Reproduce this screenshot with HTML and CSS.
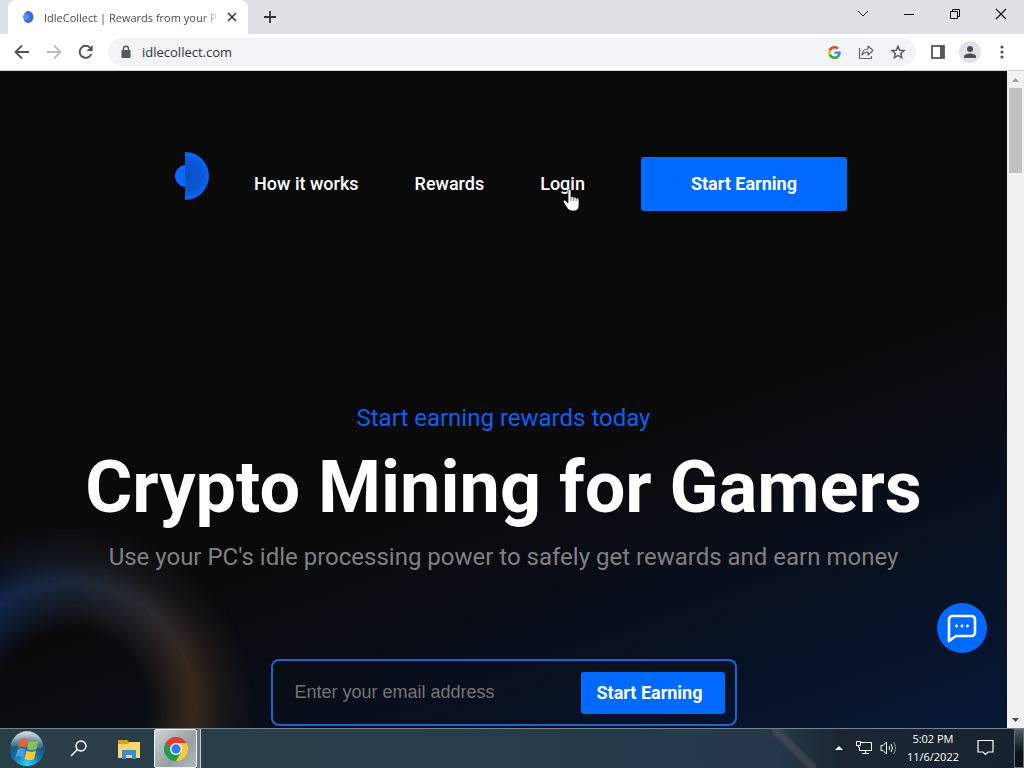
FILE: index.html
```html
<!DOCTYPE html>
<html lang="en">

<head>
    <meta charset="UTF-8">
    <meta name="viewport" content="width=device-width, initial-scale=1.0">
    <title>IdleCollect | Rewards from your PC</title>
    <link rel="stylesheet" href="styles.css">
</head>

<body>

    <!-- Tab strip -->
    <div class="tabStrip">
        <div class="tab">
            <svg class="favicon" width="16" height="16" viewBox="0 0 16 16">
                <path d="M7 2a6 6 0 0 1 0 12z" fill="#2a5fd0" />
                <path d="M9 2.300a4.500 5.700 0 0 1 0 11.400L7 14 4 11.500V5L7 2z" fill="#3d6fd6" />
                <circle cx="6" cy="8" r="3" fill="#5a8ff0" />
            </svg>
            <span class="tabTitle">IdleCollect | Rewards from your P</span>
            <button class="iconButton tabClose" aria-label="Close tab">
                <svg width="10" height="10" viewBox="0 0 10 10"><path d="M1 1l8 8M9 1L1 9" stroke="#303338" stroke-width="1.600" /></svg>
            </button>
        </div>
        <button class="iconButton newTab" aria-label="New tab">
            <svg width="14" height="14" viewBox="0 0 14 14"><path d="M7 1v12M1 7h12" stroke="#303338" stroke-width="1.800" /></svg>
        </button>
        <div class="windowButtons">
            <button class="iconButton" aria-label="Search tabs">
                <svg width="12" height="12" viewBox="0 0 12 12" fill="none" stroke="#222"><path d="M1 3l5 5 5-5" /></svg>
            </button>
            <button class="iconButton" aria-label="Minimize">
                <svg width="12" height="12" viewBox="0 0 12 12"><path d="M1 6.500h10" stroke="#111" /></svg>
            </button>
            <button class="iconButton" aria-label="Restore">
                <svg width="12" height="12" viewBox="0 0 12 12" fill="none" stroke="#111"><path d="M1.500 3.500h7v7h-7zM3.500 3.500v-2h7v7h-2" /></svg>
            </button>
            <button class="iconButton" aria-label="Close">
                <svg width="12" height="12" viewBox="0 0 12 12"><path d="M1 1l10 10M11 1L1 11" stroke="#111" stroke-width="1.100" /></svg>
            </button>
        </div>
    </div>

    <!-- Toolbar -->
    <div class="toolbar">
        <button class="iconButton" aria-label="Back">
            <svg width="16" height="16" viewBox="0 0 16 16" fill="none" stroke="#505357" stroke-width="1.800"><path d="M15 8H2M8 1.500L1.500 8 8 14.500" /></svg>
        </button>
        <button class="iconButton" aria-label="Forward">
            <svg width="16" height="16" viewBox="0 0 16 16" fill="none" stroke="#babcbe" stroke-width="1.800"><path d="M1 8h13M8 1.500L14.500 8 8 14.500" /></svg>
        </button>
        <button class="iconButton" aria-label="Reload">
            <svg width="16" height="16" viewBox="0 0 16 16"><path d="M13.300 10A6 6 0 1 1 12.500 4.200" fill="none" stroke="#505357" stroke-width="1.900" /><path d="M14.700 1v6H8.700z" fill="#505357" /></svg>
        </button>
        <div class="addressBar">
            <svg class="lock" width="12" height="14" viewBox="0 0 12 14"><rect x="1.500" y="5" width="9" height="8" rx="1" fill="#55585c" /><path d="M3.500 5.500V3.700a2.500 2.500 0 0 1 5 0v1.800" fill="none" stroke="#55585c" stroke-width="1.400" /></svg>
            <input class="address" type="text" value="idlecollect.com" aria-label="Address">
            <button class="iconButton" aria-label="Search with Google">
                <svg width="13" height="13" viewBox="0 0 48 48">
                    <path fill="#EA4335" d="M24 9.500c3.500 0 6.700 1.200 9.200 3.600l6.900-6.900C35.900 2.400 30.500 0 24 0 14.600 0 6.500 5.400 2.600 13.200l8 6.200C12.400 13.700 17.700 9.500 24 9.500z" />
                    <path fill="#4285F4" d="M47 24.600c0-1.600-.2-3.100-.4-4.600H24v9h12.900c-.6 3-2.300 5.500-4.800 7.200l7.700 6C44.400 38 47 32.100 47 24.600z" />
                    <path fill="#FBBC05" d="M10.500 28.600a14.500 14.500 0 0 1 0-9.200l-8-6.200a24 24 0 0 0 0 21.600z" />
                    <path fill="#34A853" d="M24 48c6.500 0 11.900-2.100 15.900-5.800l-7.700-6c-2.200 1.500-4.900 2.300-8.200 2.300-6.300 0-11.600-4.200-13.500-9.900l-8 6.200C6.500 42.600 14.600 48 24 48z" />
                </svg>
            </button>
            <button class="iconButton" aria-label="Share">
                <svg width="16" height="16" viewBox="0 0 16 16" fill="none" stroke="#64676b" stroke-width="1.200"><path d="M1.500 4v10.500h12V12" /><path d="M4 11c.3-4 2.500-6 6-6V2l5 4.500-5 4.500V8C7.500 8 5.500 9 4 11z" stroke-linejoin="round" /></svg>
            </button>
            <button class="iconButton" aria-label="Bookmark">
                <svg width="16" height="16" viewBox="0 0 16 16"><path d="M8 2.300l1.700 4 4.300.3-3.300 2.900 1.100 4.300L8 11.500l-3.800 2.300 1.100-4.300L2 6.600l4.300-.3z" fill="none" stroke="#55585c" stroke-width="1.400" /></svg>
            </button>
        </div>
        <button class="iconButton" aria-label="Side panel">
            <svg width="14" height="14" viewBox="0 0 14 14"><rect x="1" y="1" width="12" height="12" fill="none" stroke="#55575d" stroke-width="1.800" /><path d="M9 1h4v12H9z" fill="#55575d" /></svg>
        </button>
        <button class="iconButton" aria-label="Profile">
            <svg width="22" height="22" viewBox="0 0 22 22"><circle cx="11" cy="11" r="11" fill="#dfe2e7" /><circle cx="11" cy="8" r="3" fill="#4c5057" /><path d="M5 17v-1.500c0-2 3.500-3 6-3s6 1 6 3V17z" fill="#4c5057" /></svg>
        </button>
        <button class="iconButton" aria-label="Menu">
            <svg width="4" height="14" viewBox="0 0 4 14" fill="#505357"><circle cx="2" cy="2" r="1.600" /><circle cx="2" cy="7" r="1.600" /><circle cx="2" cy="12" r="1.600" /></svg>
        </button>
    </div>

    <!-- Web page -->
    <div class="viewport">
        <main class="page">
            <nav class="nav">
                <a href="#" aria-label="IdleCollect">
                    <svg class="logo" width="66" height="66" viewBox="0 0 66 66">
                        <defs>
                            <radialGradient id="half" gradientUnits="userSpaceOnUse" cx="26" cy="25" r="24">
                                <stop offset="0" stop-color="#0a4fc0" />
                                <stop offset=".65" stop-color="#0a58d4" />
                                <stop offset="1" stop-color="#0868f8" />
                            </radialGradient>
                        </defs>
                        <circle cx="26" cy="25" r="11" fill="#056aff" />
                        <path d="M25 1a24 24 0 0 1 0 48z" fill="url(#half)" />
                    </svg>
                </a>
                <a class="navLink" href="#">How it works</a>
                <a class="navLink" href="#">Rewards</a>
                <a class="navLink" href="#">Login
                    <svg class="cursor" width="18" height="24" viewBox="0 0 18 24"><path d="M5 2c0-2 3-2 3 0v6c1-1 2.500-.5 2.700.5 1-.7 2.200-.2 2.500.8 1.200-.6 2.800 0 2.800 1.700v5c0 4-2 6-6 6-3.500 0-5-1.500-6.500-4L.6 13.500c-1-1.500.8-3 2.200-1.700L5 14z" fill="#fff" stroke="#111" stroke-width=".8" /><path d="M8 8v4M10.700 8.500V12M13.200 9.500V12" stroke="#111" stroke-width=".6" /></svg>
                </a>
                <button class="button navButton">Start Earning</button>
            </nav>

            <section class="hero">
                <p class="kicker">Start earning rewards today</p>
                <h1>Crypto Mining for Gamers</h1>
                <p class="lead">Use your PC's idle processing power to safely get rewards and earn money</p>
                <form class="signup">
                    <input class="email" type="email" placeholder="Enter your email address" aria-label="Email address">
                    <button class="button" type="button">Start Earning</button>
                </form>
            </section>

            <button class="chat" aria-label="Open chat">
                <svg width="30" height="30" viewBox="0 0 30 30"><path d="M2 28V6.500A3.500 3.500 0 0 1 5.500 3h19A3.500 3.500 0 0 1 28 6.500v13a3.500 3.500 0 0 1-3.500 3.500H9z" fill="none" stroke="#fff" stroke-width="2.600" stroke-linejoin="round" /><g fill="#fff"><circle cx="9.500" cy="13" r="1.400" /><circle cx="15" cy="13" r="1.400" /><circle cx="20.500" cy="13" r="1.400" /></g></svg>
            </button>
        </main>
        <div class="scrollbar">
            <svg width="17" height="17" viewBox="0 0 17 17"><path d="M5 11l3.500-4 3.500 4z" fill="#a0a0a0" /></svg>
            <div class="thumb"></div>
            <svg width="17" height="17" viewBox="0 0 17 17"><path d="M5 7l3.500 4L12 7z" fill="#4c4c4c" /></svg>
        </div>
    </div>

    <!-- Taskbar -->
    <div class="taskbar">
        <button class="taskButton start" aria-label="Start">
            <svg width="36" height="36" viewBox="0 0 36 36">
                <defs>
                    <radialGradient id="orb" cx=".5" cy=".95" r=".95">
                        <stop offset="0" stop-color="#35d4f5" />
                        <stop offset=".4" stop-color="#1577ad" />
                        <stop offset=".75" stop-color="#1d4a72" />
                        <stop offset="1" stop-color="#8ba3b4" />
                    </radialGradient>
                    <linearGradient id="gloss" x2="0" y2="1">
                        <stop offset="0" stop-color="#fff" stop-opacity=".65" />
                        <stop offset="1" stop-color="#fff" stop-opacity=".15" />
                    </linearGradient>
                </defs>
                <circle cx="18" cy="18" r="17.500" fill="url(#orb)" stroke="#274b62" />
                <path d="M2 16a16 16 0 0 1 32 0c-9 4-22-4-32 0z" fill="url(#gloss)" />
                <path d="M11.500 8.500c2.500-1.500 5-1.500 7.500 0l-2 8.500c-2.500-1.700-5-1.700-8 0z" fill="#e8602c" />
                <path d="M20 9.500c3 1.700 6 1.700 9.500 0L27.500 18c-3 1.700-6 1.700-9.500 0z" fill="#8cc04b" />
                <path d="M8.500 18.500c3-1.700 5.500-1.700 8 0l-2 8c-2.500-1.700-5-1.700-8 0z" fill="#4a9edb" />
                <path d="M17.500 19.500c3.500 1.700 6.500 1.700 9.500 0l-2 8.500c-3 1.700-6 1.700-9.500 0z" fill="#fbc938" />
            </svg>
        </button>
        <button class="taskButton" aria-label="Search">
            <svg width="18" height="18" viewBox="0 0 18 18" fill="none" stroke="#fff" stroke-width="1.400"><circle cx="11" cy="6" r="5" /><path d="M7.400 9.600L1 16" /></svg>
        </button>
        <button class="taskButton" aria-label="File Explorer">
            <svg width="22" height="20" viewBox="0 0 22 20"><path d="M0 1h9l2 2h11v5H0z" fill="#d9a21b" /><path d="M0 5h10l2-2h10v16H0z" fill="#fbd768" /><path d="M4 20v-9h14v9h-4v-4H8v4z" fill="#3b8fc9" /></svg>
        </button>
        <button class="taskButton active" aria-label="Google Chrome">
            <svg width="24" height="24" viewBox="0 0 24 24">
                <path d="M12 12L1.600 6A12 12 0 0 1 22.400 6z" fill="#e33b2e" />
                <path d="M12 12L22.400 6A12 12 0 0 1 12 24z" fill="#fcc934" />
                <path d="M12 12v12A12 12 0 0 1 1.600 6z" fill="#1e9e4a" />
                <path d="M12 6h10.400l-5.200 9z" fill="#fcc934" />
                <path d="M6.800 15L1.600 6 12 6z" fill="#e33b2e" />
                <path d="M1.600 6l5.200 9L12 18z" fill="#1e9e4a" />
                <path d="M6.800 15L12 24l5.200-9z" fill="#1e9e4a" />
                <circle cx="12" cy="12" r="6" fill="#fff" />
                <circle cx="12" cy="12" r="4.700" fill="#2f7bf0" />
            </svg>
        </button>
        <div class="stack"></div>
        <div class="tray">
            <svg width="8" height="4" viewBox="0 0 8 4"><path d="M0 4l4-4 4 4z" fill="#fff" /></svg>
            <svg class="network" width="16" height="14" viewBox="0 0 16 14" fill="none" stroke="#fff"><path d="M5 1.500h10.500v8H3.500V6M9.500 9.500v3M6 12.500h7M.5.500h4v4h-4zM2.500 4.500v2" /></svg>
            <svg width="18" height="14" viewBox="0 0 18 14" fill="none" stroke="#fff"><path d="M1 4.500h2L6.500 1v12L3 9.500H1z" /><path d="M9 5q1.500 2 0 4M11 3q3 4 0 8" /><path d="M13.500 1q4 6 0 12" stroke="#8c969e" /></svg>
            <div class="clock">
                <span>5:02 PM</span>
                <span>11/6/2022</span>
            </div>
            <svg width="17" height="17" viewBox="0 0 17 17" fill="none" stroke="#fff" stroke-width="1.200"><path d="M1 1.500h15v11.500h-5L8.500 15.500 6 13H1z" /></svg>
        </div>
        <button class="showDesktop" aria-label="Show desktop"></button>
    </div>

</body>

</html>
```
FILE: styles.css
```css
* {
    box-sizing: border-box;
}

body {
    margin: 0;
    height: 100vh;
    display: flex;
    flex-direction: column;
    overflow: hidden;
    background-color: #0a0a0a;
    font-family: "Open Sans", "Noto Sans", sans-serif;
    font-size: 11px;
}

h1,
p {
    margin: 0;
}

button,
input {
    border: 0;
    padding: 0;
    margin: 0;
    background: none;
    font-family: inherit;
}

svg {
    display: block;
    flex-shrink: 0;
}

.iconButton {
    width: 32px;
    height: 28px;
    display: flex;
    align-items: center;
    justify-content: center;
    flex-shrink: 0;
}

/* tab strip */
.tabStrip {
    height: 34px;
    display: flex;
    flex-shrink: 0;
    padding-left: 8px;
    background-color: #dee1e6;
}

.tab {
    width: 240px;
    display: flex;
    align-items: center;
    padding: 0 4px 0 12px;
    border-radius: 8px 8px 0 0;
    background-color: #fff;
}

.tabTitle {
    flex: 1;
    margin-left: 8px;
    overflow: hidden;
    white-space: nowrap;
    color: #46494d;
    -webkit-mask-image: linear-gradient(90deg, #000 90%, transparent);
    mask-image: linear-gradient(90deg, #000 90%, transparent);
}

.tabClose {
    width: 24px;
}

.newTab {
    height: 34px;
    margin-left: 6px;
}

.windowButtons {
    display: flex;
    margin-left: auto;
}

.windowButtons .iconButton {
    width: 46px;
}

/* toolbar */
.toolbar {
    height: 37px;
    display: flex;
    align-items: center;
    flex-shrink: 0;
    padding: 0 6px;
    border-bottom: 1px solid #cfd1d4;
    background-color: #fff;
}

.addressBar {
    height: 28px;
    flex: 1;
    display: flex;
    align-items: center;
    margin: 0 6px;
    padding: 0 2px 0 12px;
    border-radius: 14px;
    background-color: #f1f3f4;
}

.address {
    flex: 1;
    min-width: 0;
    margin-left: 10px;
    font-size: 13px;
    color: #303338;
}

/* web page */
.viewport {
    flex: 1;
    min-height: 0;
    display: flex;
}

.page {
    flex: 1;
    position: relative;
    overflow: hidden;
    padding-top: 80px;
    font-family: Roboto, sans-serif;
    background: linear-gradient(160deg, #0a0a0a 58%, #07142c 92%, #071734);
}

/* soft coloured ring in the corner */
.page::before {
    content: "";
    position: absolute;
    left: -130px;
    bottom: -180px;
    width: 400px;
    height: 400px;
    background: conic-gradient(#1c2738, #2a2a2e 40deg, #38281c 75deg, #38281c 180deg, #0f2a5c 280deg, #10264f 320deg, #1c2738);
    -webkit-mask-image: radial-gradient(circle, transparent 76px, rgba(0, 0, 0, .5) 98px, #000 125px, rgba(0, 0, 0, .4) 150px, transparent 185px);
    mask-image: radial-gradient(circle, transparent 76px, rgba(0, 0, 0, .5) 98px, #000 125px, rgba(0, 0, 0, .4) 150px, transparent 185px);
    filter: blur(10px);
}

.nav {
    display: flex;
    align-items: center;
    justify-content: center;
}

.navLink {
    position: relative;
    padding: 0 28px;
    font-size: 18px;
    font-weight: 500;
    line-height: 24px;
    color: #fff;
    text-decoration: none;
}

.cursor {
    position: absolute;
    left: 51px;
    top: 17px;
}

.button {
    height: 42px;
    padding: 0 22px 2px 16px;
    border-radius: 3px;
    background-color: #006aff;
    font-size: 18px;
    font-weight: 700;
    color: #fff;
}

.navButton {
    height: 54px;
    margin-left: 28px;
    padding: 0 50px 2px;
}

.hero {
    position: relative;
    display: flex;
    flex-direction: column;
    align-items: center;
    padding-top: 185px;
    text-align: center;
}

.kicker {
    font-size: 24px;
    line-height: 32px;
    color: #0f5ff5;
}

h1 {
    margin: 2px 0 1px;
    font-size: 72px;
    font-weight: 700;
    line-height: 104px;
    color: #fff;
}

.lead {
    font-size: 24px;
    line-height: 32px;
    color: #808083;
}

.signup {
    width: 466px;
    max-width: 100%;
    display: flex;
    align-items: center;
    margin-top: 86px;
    padding: 11px 10px 10px 22px;
    border: 2px solid #1f62d8;
    border-radius: 8px;
}

.email {
    flex: 1;
    min-width: 0;
    padding-bottom: 2px;
    font-family: "Liberation Sans", Arial, sans-serif;
    font-size: 18px;
    color: #fff;
}

.email::placeholder {
    color: #757575;
}

.chat {
    position: absolute;
    right: 20px;
    bottom: 75px;
    width: 50px;
    height: 50px;
    display: flex;
    align-items: center;
    justify-content: center;
    border-radius: 50%;
    background-color: #006aff;
}

.scrollbar {
    width: 17px;
    display: flex;
    flex-direction: column;
    background-color: #f1f1f1;
}

.thumb {
    height: 85px;
    margin: 0 2px auto;
    background-color: #c1c1c1;
}

/* taskbar */
.taskbar {
    height: 40px;
    display: flex;
    flex-shrink: 0;
    border-top: 1px solid #75868c;
    background:
        linear-gradient(45deg, transparent 40%, rgba(110, 98, 96, .35) 46%, rgba(110, 98, 96, .35) 54%, transparent 60%) 772px 0 / 44px 100% no-repeat,
        linear-gradient(90deg, #2a3e47, #263e4a 40%, #24384a 76%, #1b2632 82%, #18222e);
}

.taskButton {
    width: 50px;
    display: flex;
    align-items: center;
    justify-content: center;
    flex-shrink: 0;
}

.start {
    width: 54px;
}

.active {
    width: 43px;
    border: 1px solid #f0f2f3;
    border-radius: 2px;
    background: linear-gradient(135deg, #d0d4d5, #989ea1 60%, #b4b9bb);
}

.stack {
    width: 4px;
    border-right: 1px solid #c4c9cb;
    background-color: #6d7a80;
}

.tray {
    display: flex;
    align-items: center;
    margin-left: auto;
    padding: 0 20px 2px 0;
    color: #fff;
}

.network {
    margin: 0 8px 0 13px;
}

.clock {
    display: flex;
    flex-direction: column;
    margin: 0 18px 0 9px;
    line-height: 18px;
    text-align: center;
}

.showDesktop {
    width: 10px;
    border: 1px solid #65717a;
    background: linear-gradient(#4e5960, #0c1219 60%);
}
```
